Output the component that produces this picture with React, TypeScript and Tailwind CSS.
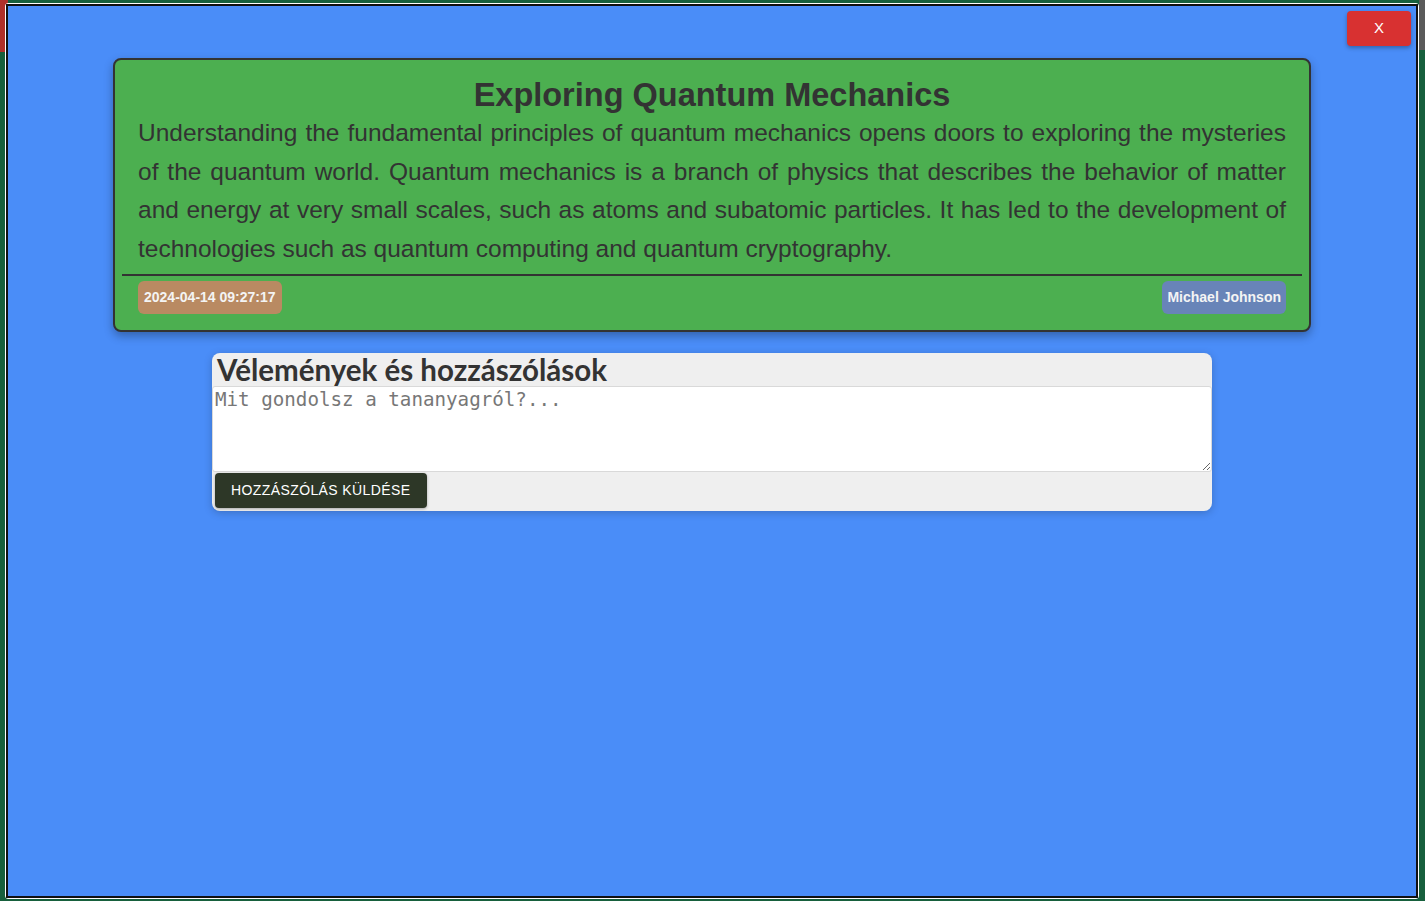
import React from 'react';

const body =
  'Understanding the fundamental principles of quantum mechanics opens doors to exploring the mysteries of the quantum world. Quantum mechanics is a branch of physics that describes the behavior of matter and energy at very small scales, such as atoms and subatomic particles. It has led to the development of technologies such as quantum computing and quantum cryptography.';

function PostCard() {
  return (
    <div className="mx-auto mt-[52px] w-[1198px] rounded-lg border-2 border-[#333] bg-[#4caf50] px-[7px] pb-[16px] pt-[16px] text-[#333] shadow-[0_4px_10px_rgba(0,0,0,0.3)]">
      <h1 className="text-center font-['Liberation_Sans',Arial,sans-serif] text-[32.5px] font-bold leading-[38px]">Exploring Quantum Mechanics</h1>
      <p className="px-4 text-justify font-['Liberation_Sans',Arial,sans-serif] text-[24.5px] leading-[38.5px]">{body}</p>
      <hr className="mt-[6px] border-t-2 border-[#333]" />
      <div className="mt-[5px] flex items-center justify-between px-4 font-['Liberation_Sans',Arial,sans-serif] text-[14px] font-bold text-[#f4f4f4]">
        <span className="flex h-[33px] items-center rounded-md bg-[#b98a62] px-[6px]">2024-04-14 09:27:17</span>
        <span className="flex h-[33px] items-center rounded-md bg-[#6884b8] px-[5px]">Michael Johnson</span>
      </div>
    </div>
  );
}

function Comments() {
  return (
    <div className="mx-auto mt-[21px] w-[1000px] rounded-lg bg-[#efefef] pb-[3px] shadow-[0_2px_8px_rgba(0,0,0,0.2)]">
      <h2 className="px-[5px] font-['Lato',sans-serif] text-[29.5px] font-bold leading-[33px] text-[#333]">Vélemények és hozzászólások</h2>
      <textarea
        placeholder="Mit gondolsz a tananyagról?..."
        className="block h-[86px] w-full resize-y rounded-[3px] border border-[#d9d9d9] bg-white px-[2px] py-[1px] font-['DejaVu_Sans_Mono',monospace] text-[19.2px] leading-[24px] text-[#333] outline-none placeholder:text-[#777]"
      />
      <button className="ml-[3px] mt-px h-[35px] rounded bg-[#2d3727] px-4 font-['Liberation_Sans',Arial,sans-serif] text-[14px] uppercase tracking-[0.4px] text-white shadow-[0_1px_3px_rgba(0,0,0,0.3)]">
        Hozzászólás küldése
      </button>
    </div>
  );
}

export default function App() {
  return (
    <div className="relative h-[901px] w-full overflow-hidden bg-[#17603d] pb-[2px] pl-[5px] pr-[6px] pt-[3px]">
      <div className="absolute left-0 top-0 h-[52px] w-[8px] bg-[#b0302a]" />
      <div className="absolute right-0 top-0 h-[50px] w-[6px] bg-[#5a5a5a]" />
      <div className="relative h-full rounded-[3px] border border-white">
        <div className="relative h-full border-2 border-[#111] bg-[#4a8df8]">
          <button className="absolute right-[5px] top-[5px] h-[35px] w-[64px] rounded bg-[#d83131] font-['Liberation_Sans',Arial,sans-serif] text-[15px] text-white shadow-[0_2px_4px_rgba(0,0,0,0.3)]">
            X
          </button>
          <PostCard />
          <Comments />
        </div>
      </div>
    </div>
  );
}
